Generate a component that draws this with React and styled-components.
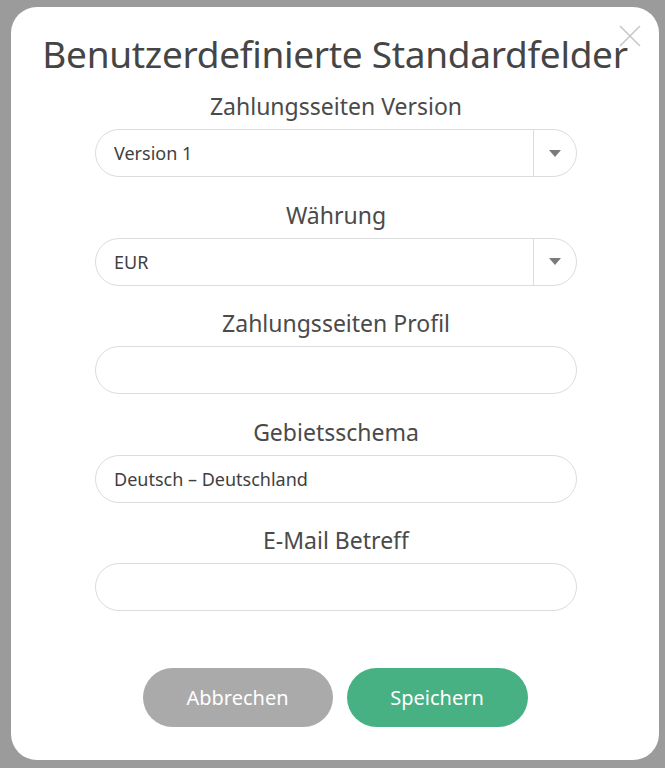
import styled, { createGlobalStyle } from "styled-components";

const GlobalStyle = createGlobalStyle`
  html, body {
    margin: 0;
    padding: 0;
    background: #9b9b9b;
  }
  body {
    font-family: "Noto Sans", "Open Sans", sans-serif;
  }
`;

const Overlay = styled.div`
  width: 665px;
  height: 768px;
  padding: 7px 6px 8px 11px;
  box-sizing: border-box;
`;

const Modal = styled.div`
  position: relative;
  height: 100%;
  background: #fff;
  border-radius: 26px;
  display: flex;
  flex-direction: column;
  align-items: center;
  padding-top: 24px;
  box-sizing: border-box;
`;

const Title = styled.h1`
  margin: 0 0 12px;
  font-size: 37px;
  line-height: 46px;
  font-weight: 400;
  color: #454545;
  letter-spacing: -0.3px;
`;

const CloseButton = styled.button`
  position: absolute;
  top: 18px;
  right: 18px;
  width: 22px;
  height: 22px;
  padding: 0;
  border: none;
  background: none;
  cursor: pointer;
`;

const Fields = styled.div`
  width: 482px;
  margin-left: 2px;
  display: flex;
  flex-direction: column;
  gap: 20.5px;
`;

const Field = styled.div`
  display: flex;
  flex-direction: column;
  align-items: stretch;
`;

const Label = styled.label`
  text-align: center;
  font-size: 23px;
  line-height: 30px;
  color: #4a4a4a;
  padding-top: 2px;
  margin-bottom: 8px;
`;

const Box = styled.div`
  height: 48px;
  border: 1px solid #dcdcdc;
  border-radius: 24px;
  box-sizing: border-box;
  display: flex;
  align-items: center;
  overflow: hidden;
`;

const Value = styled.span`
  flex: 1;
  padding-left: 18px;
  font-size: 18px;
  color: #3f3f3f;
`;

const Caret = styled.span`
  width: 42px;
  height: 100%;
  border-left: 1px solid #dcdcdc;
  display: flex;
  align-items: center;
  justify-content: center;
`;

const Actions = styled.div`
  margin-top: 57px;
  display: flex;
  gap: 14px;
`;

const Button = styled.button`
  height: 59px;
  width: ${(p) => p.$width}px;
  border: none;
  border-radius: 30px;
  background: ${(p) => p.$bg};
  color: #fff;
  font-family: inherit;
  font-size: 20px;
  cursor: pointer;
`;

function Select({ value }) {
  return (
    <Box>
      <Value>{value}</Value>
      <Caret>
        <svg width="12" height="7" viewBox="0 0 12 7">
          <path d="M0 0h12L6 7z" fill="#7a7a7a" />
        </svg>
      </Caret>
    </Box>
  );
}

const fields = [
  { label: "Zahlungsseiten Version", value: "Version 1", select: true },
  { label: "Währung", value: "EUR", select: true },
  { label: "Zahlungsseiten Profil", value: "" },
  { label: "Gebietsschema", value: "Deutsch – Deutschland" },
  { label: "E-Mail Betreff", value: "" },
];

export default function App() {
  return (
    <>
      <GlobalStyle />
      <Overlay>
        <Modal>
          <CloseButton aria-label="Schließen">
            <svg width="22" height="22" viewBox="0 0 22 22">
              <path d="M1 1L21 21M21 1L1 21" stroke="#c8c8c8" strokeWidth="1.6" />
            </svg>
          </CloseButton>
          <Title>Benutzerdefinierte Standardfelder</Title>
          <Fields>
            {fields.map((f) => (
              <Field key={f.label}>
                <Label>{f.label}</Label>
                {f.select ? (
                  <Select value={f.value} />
                ) : (
                  <Box>
                    <Value>{f.value}</Value>
                  </Box>
                )}
              </Field>
            ))}
          </Fields>
          <Actions>
            <Button $bg="#aaaaaa" $width={190}>
              Abbrechen
            </Button>
            <Button $bg="#48b184" $width={181}>
              Speichern
            </Button>
          </Actions>
        </Modal>
      </Overlay>
    </>
  );
}
